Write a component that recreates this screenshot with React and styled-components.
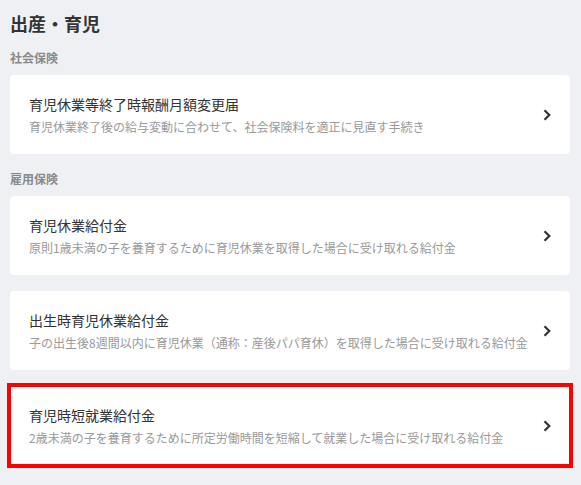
import React from 'react'
import styled, { createGlobalStyle } from 'styled-components'

const GlobalStyle = createGlobalStyle`
  html, body {
    margin: 0;
    background: #eff0f4;
  }
  body {
    font-family: "Noto Sans CJK JP", "Noto Sans", sans-serif;
    color: #333;
  }
`

const sections = [
  {
    label: '社会保険',
    items: [
      {
        title: '育児休業等終了時報酬月額変更届',
        desc: '育児休業終了後の給与変動に合わせて、社会保険料を適正に見直す手続き',
      },
    ],
  },
  {
    label: '雇用保険',
    items: [
      {
        title: '育児休業給付金',
        desc: '原則1歳未満の子を養育するために育児休業を取得した場合に受け取れる給付金',
      },
      {
        title: '出生時育児休業給付金',
        desc: '子の出生後8週間以内に育児休業（通称：産後パパ育休）を取得した場合に受け取れる給付金',
      },
      {
        title: '育児時短就業給付金',
        desc: '2歳未満の子を養育するために所定労働時間を短縮して就業した場合に受け取れる給付金',
        highlighted: true,
      },
    ],
  },
]

function Chevron() {
  return (
    <svg width="8" height="12" viewBox="0 0 8 12" fill="none">
      <polyline points="1.5,1.2 6.3,6 1.5,10.8" stroke="#333" strokeWidth="2.2" strokeLinejoin="miter" />
    </svg>
  )
}

export default function App() {
  return (
    <Page>
      <GlobalStyle />
      <Heading>出産・育児</Heading>
      {sections.map((s) => (
        <Section key={s.label}>
          <Label>{s.label}</Label>
          <List>
            {s.items.map((it) => (
              <Card key={it.title} highlighted={it.highlighted}>
                <Texts>
                  <Title>{it.title}</Title>
                  <Desc>{it.desc}</Desc>
                </Texts>
                <Chevron />
              </Card>
            ))}
          </List>
        </Section>
      ))}
    </Page>
  )
}

const Page = styled.div`
  padding: 10px 11px 20px 10px;
`
const Heading = styled.h1`
  margin: 0;
  font-size: 18px;
  line-height: 26px;
  font-weight: 700;
  color: #333;
`
const Section = styled.section`
  margin-top: 13px;
  & + & {
    margin-top: 16px;
  }
`
const Label = styled.div`
  font-size: 12px;
  line-height: 18px;
  font-weight: 700;
  color: #8a8a8a;
  margin-bottom: 8px;
`
const List = styled.div`
  display: flex;
  flex-direction: column;
  gap: 16px;
`
const Card = styled.div.withConfig({ shouldForwardProp: (p) => p !== 'highlighted' })`
  height: 79px;
  box-sizing: border-box;
  padding: 0 19px;
  background: #fff;
  border-radius: 4px;
  display: flex;
  align-items: center;
  justify-content: space-between;
  ${(p) => p.highlighted && `
    outline: 4px solid #ff0000;
    outline-offset: -1px;
    border-radius: 0;
  `}
`
const Texts = styled.div`
  display: flex;
  flex-direction: column;
  gap: 4px;
`
const Title = styled.div`
  font-size: 14px;
  line-height: 20px;
  color: #333;
`
const Desc = styled.div`
  font-size: 12px;
  line-height: 18px;
  color: #999;
`
